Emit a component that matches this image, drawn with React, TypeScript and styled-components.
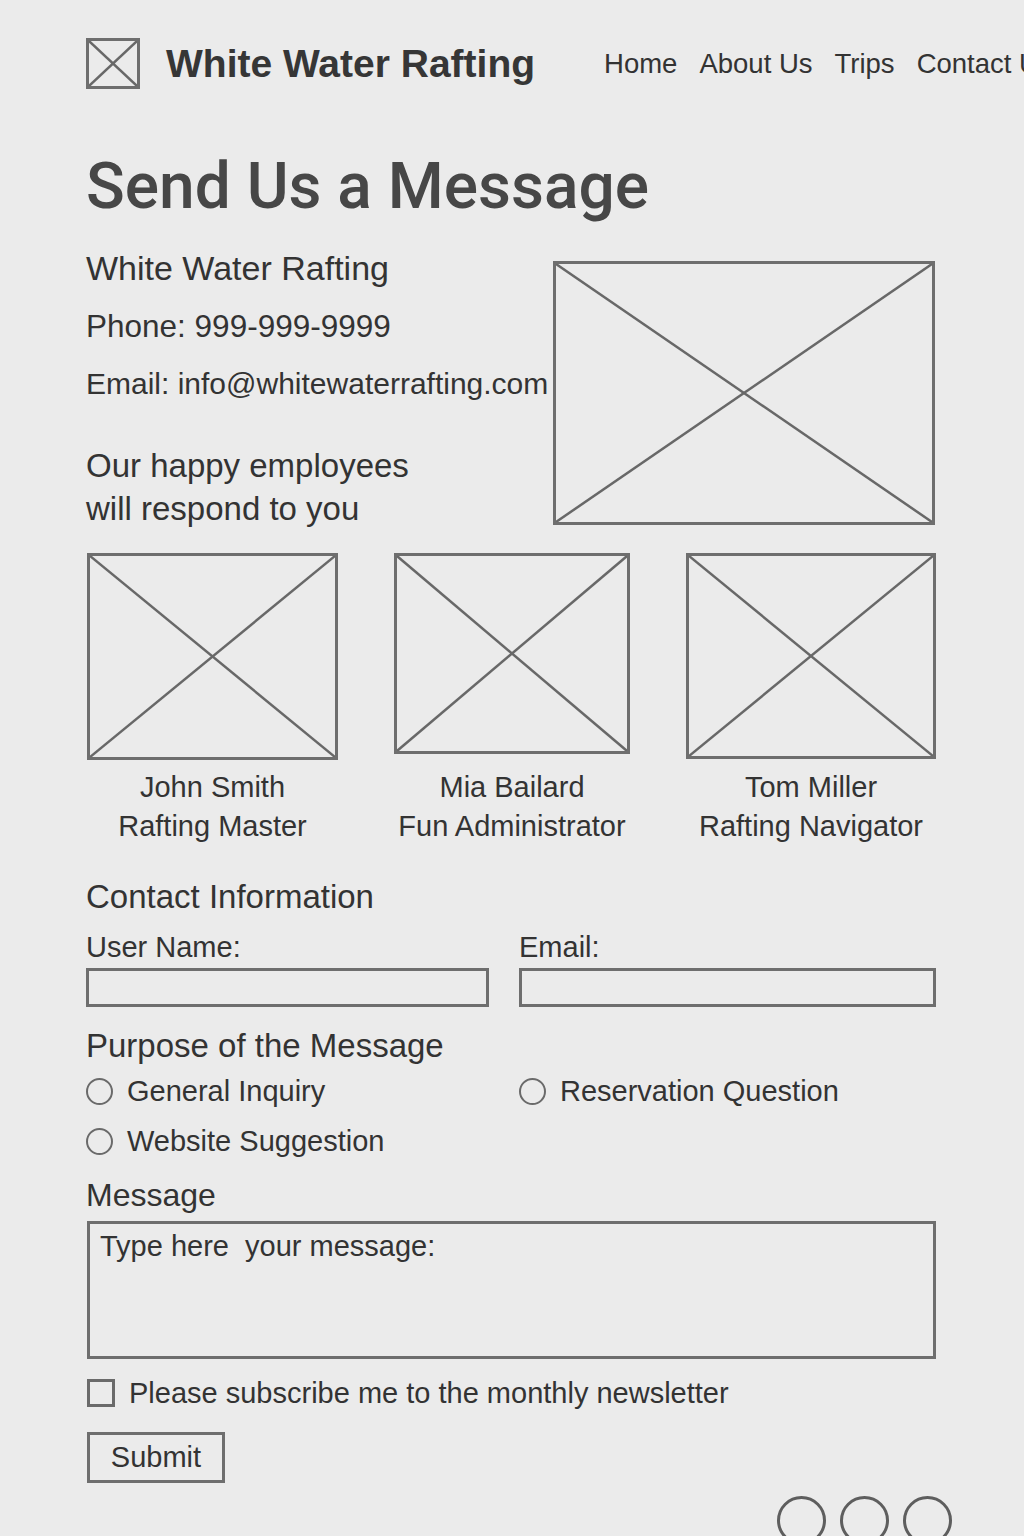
import styled, { createGlobalStyle } from 'styled-components';

const GlobalStyle = createGlobalStyle`
    html, body {
        margin: 0;
        background: #ebebeb;
        overflow: hidden;
    }
    body {
        font-family: "Liberation Sans", Arial, sans-serif;
        color: #333;
    }
`;

const Page = styled.div`
    width: 1024px;
    height: 1536px;
    box-sizing: border-box;
    padding: 38px 0 0 86px;
    overflow: hidden;
`;

const Header = styled.header`
    display: flex;
    align-items: center;
    height: 51px;
    white-space: nowrap;
`;

const SiteTitle = styled.div`
    margin-left: 26px;
    font-size: 39px;
    font-weight: 700;
    color: #363636;
`;

const Nav = styled.nav`
    display: flex;
    gap: 22px;
    margin-left: 69px;
    font-size: 27.5px;
    color: #333;
`;

const Heading = styled.h1`
    margin: 66px 0 0;
    font-family: Roboto, "Liberation Sans", sans-serif;
    font-weight: 500;
    font-size: 64px;
    line-height: 64px;
    color: #474747;
`;

const Intro = styled.section`
    display: flex;
    margin-top: 29px;
`;

const InfoColumn = styled.div`
    flex: 1;
    display: flex;
    flex-direction: column;
    gap: 18px;
`;

const InfoLine = styled.div<{ size?: number }>`
    font-size: ${p => p.size || 30}px;
    line-height: 40px;
    white-space: nowrap;
`;

const Tagline = styled.div`
    margin-top: 22px;
    font-size: 33px;
    line-height: 43px;
`;

const Box = styled.div<{ w: number; h: number; border?: number }>`
    width: ${p => p.w}px;
    height: ${p => p.h}px;
    flex-shrink: 0;
    box-sizing: border-box;
    border: ${p => p.border || 3}px solid #6e6e6e;

    svg {
        display: block;
        width: 100%;
        height: 100%;
    }
    line {
        stroke: #686868;
        stroke-width: 2.5;
    }
`;

const HeroBox = styled(Box)`
    margin-top: 13px;
    margin-right: 89px;
`;

function Placeholder(props: { w: number; h: number; border?: number; className?: string }) {
    return (
        <Box w={props.w} h={props.h} border={props.border} className={props.className}>
            <svg>
                <line x1="0" y1="0" x2="100%" y2="100%" />
                <line x1="100%" y1="0" x2="0" y2="100%" />
            </svg>
        </Box>
    );
}

const Team = styled.section`
    display: flex;
    gap: 56px;
    margin-top: 23px;
    margin-left: 1px;
`;

const Member = styled.div<{ w: number }>`
    width: ${p => p.w}px;
    display: grid;
    grid-template-rows: 215px auto;
`;

const Caption = styled.div`
    text-align: center;
    font-size: 29px;
    line-height: 39px;
    white-space: nowrap;
`;

const SectionTitle = styled.h2<{ gap: number; size?: number }>`
    margin: ${p => p.gap}px 0 0;
    font-weight: 400;
    font-size: ${p => p.size || 33}px;
    line-height: 40px;
    color: #333;
`;

const FieldGrid = styled.div`
    display: grid;
    grid-template-columns: 403px 417px;
    column-gap: 30px;
    margin-top: 13px;
`;

const Label = styled.label`
    display: block;
    font-size: 29px;
    line-height: 34px;
`;

const TextInput = styled.input`
    display: block;
    width: 100%;
    height: 39px;
    margin-top: 4px;
    box-sizing: border-box;
    border: 3px solid #6e6e6e;
    background: transparent;
    outline: none;
`;

const RadioGrid = styled.div`
    display: grid;
    grid-template-columns: 433px 417px;
    row-gap: 16px;
    margin-top: 8px;
`;

const Choice = styled.div`
    display: flex;
    align-items: center;
    gap: 14px;
    font-size: 29px;
    line-height: 34px;
    white-space: nowrap;
`;

const RadioMark = styled.span`
    width: 27px;
    height: 27px;
    box-sizing: border-box;
    border: 2.5px solid #6a6a6a;
    border-radius: 50%;
    flex-shrink: 0;
`;

const CheckMark = styled.span`
    width: 28px;
    height: 28px;
    box-sizing: border-box;
    border: 3px solid #6a6a6a;
    flex-shrink: 0;
    margin-left: 1px;
`;

const MessageBox = styled.div`
    width: 849px;
    height: 138px;
    margin-top: 6px;
    margin-left: 1px;
    box-sizing: border-box;
    border: 3px solid #6e6e6e;
    padding: 5px 10px;
    font-size: 29px;
    line-height: 34px;
    white-space: pre;
`;

const CheckRow = styled(Choice)`
    margin-top: 17px;
`;

const SubmitButton = styled.button`
    display: block;
    width: 138px;
    height: 51px;
    margin: 22px 0 0 1px;
    box-sizing: border-box;
    border: 3px solid #6e6e6e;
    background: transparent;
    font-family: "Liberation Sans", Arial, sans-serif;
    font-size: 29px;
    color: #333;
    padding: 0;
`;

const Socials = styled.div`
    display: flex;
    justify-content: flex-end;
    gap: 14px;
    width: 866px;
    margin-top: 13px;
`;

const SocialRing = styled.span`
    width: 49px;
    height: 49px;
    box-sizing: border-box;
    border: 3px solid #5e5e5e;
    border-radius: 50%;
`;

const team = [
    { name: 'John Smith', role: 'Rafting Master', w: 251, h: 207 },
    { name: 'Mia Bailard', role: 'Fun Administrator', w: 236, h: 201 },
    { name: 'Tom Miller', role: 'Rafting Navigator', w: 250, h: 206 },
];

export default function App() {
    return (
        <Page>
            <GlobalStyle />
            <Header>
                <Placeholder w={54} h={51} />
                <SiteTitle>White Water Rafting</SiteTitle>
                <Nav>
                    <span>Home</span>
                    <span>About Us</span>
                    <span>Trips</span>
                    <span>Contact Us</span>
                </Nav>
            </Header>

            <Heading>Send Us a Message</Heading>

            <Intro>
                <InfoColumn>
                    <InfoLine size={34}>White Water Rafting</InfoLine>
                    <InfoLine size={31.5}>Phone: 999-999-9999</InfoLine>
                    <InfoLine>Email: info@whitewaterrafting.com</InfoLine>
                    <Tagline>Our happy employees<br />will respond to you</Tagline>
                </InfoColumn>
                <HeroBox as={Placeholder} w={382} h={264} />
            </Intro>

            <Team>
                {team.map(m => (
                    <Member key={m.name} w={m.w}>
                        <Placeholder w={m.w} h={m.h} />
                        <Caption>{m.name}<br />{m.role}</Caption>
                    </Member>
                ))}
            </Team>

            <SectionTitle gap={31}>Contact Information</SectionTitle>
            <FieldGrid>
                <div>
                    <Label>User Name:</Label>
                    <TextInput type="text" />
                </div>
                <div>
                    <Label>Email:</Label>
                    <TextInput type="email" />
                </div>
            </FieldGrid>

            <SectionTitle gap={19}>Purpose of the Message</SectionTitle>
            <RadioGrid>
                <Choice><RadioMark />General Inquiry</Choice>
                <Choice><RadioMark />Reservation Question</Choice>
                <Choice><RadioMark />Website Suggestion</Choice>
            </RadioGrid>

            <SectionTitle gap={17} size={32}>Message</SectionTitle>
            <MessageBox>{'Type here  your message:'}</MessageBox>

            <CheckRow><CheckMark />Please subscribe me to the monthly newsletter</CheckRow>

            <SubmitButton>Submit</SubmitButton>

            <Socials>
                <SocialRing />
                <SocialRing />
                <SocialRing />
            </Socials>
        </Page>
    );
}
